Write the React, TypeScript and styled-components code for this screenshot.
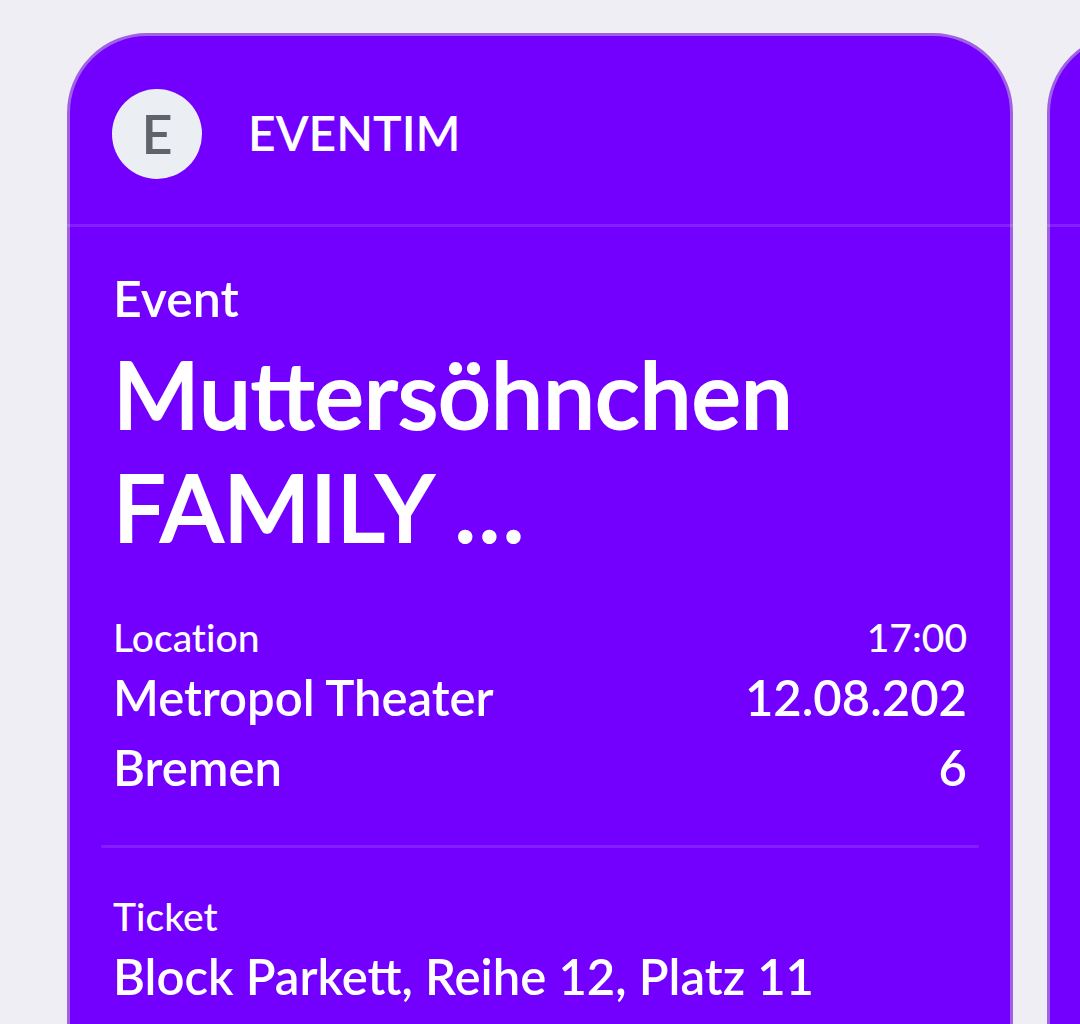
import React from "react";
import styled, { createGlobalStyle } from "styled-components";

const GlobalStyle = createGlobalStyle`
  * { box-sizing: border-box; }
  body {
    margin: 0;
    background: #eeeef4;
    color: #fff;
    font-family: "Google Sans", Lato, "Open Sans", sans-serif;
    font-weight: 600;
  }
  h1, h2, p, dl, dt, dd { margin: 0; font-weight: inherit; }
`;

const Carousel = styled.main`
  display: flex;
  gap: 34px;
  height: 100vh;
  padding: 33px 67px 0;
  overflow: hidden;
`;

const Pass = styled.article`
  flex: 0 0 100%;
  height: max-content;
  min-height: 120vh;
  padding-bottom: 64px;
  border: 3px solid #a061e4;
  border-radius: 80px;
  background: #7300ff;
`;

const Header = styled.header`
  display: flex;
  align-items: center;
  gap: 46px;
  height: 191px;
  margin: 0 -3px;
  padding: 8px 45px 0;
  border-bottom: 3px solid rgba(255, 255, 255, 0.12);
`;

const Avatar = styled.span`
  display: grid;
  place-items: center;
  width: 90px;
  height: 90px;
  border-radius: 50%;
  background: #ebeff3;
  color: #60646a;
  font-size: 54px;
  line-height: 90px;
`;

const Issuer = styled.h2`
  padding-bottom: 2px;
  font-size: 48px;
  line-height: 64px;
`;

const Section = styled.section`
  padding: 38px 43px 0;
`;

const Kicker = styled.p`
  font-size: 50px;
  line-height: 66px;
`;

const Title = styled.h1`
  padding: 6px 0 50px;
  font-size: 93px;
  line-height: 113px;
  && { font-weight: 500; }
  -webkit-text-stroke: 2px #fff;
  stroke-linejoin: round;
`;

const Details = styled.dl<{ $split?: boolean }>`
  display: grid;
  grid-template-columns: ${(p) => (p.$split ? "minmax(0, 1fr) 224px" : "minmax(0, 1fr)")};
  gap: 96px;
  padding: 0 43px;
`;

const Field = styled.div<{ $end?: boolean }>`
  text-align: ${(p) => (p.$end ? "right" : "left")};
`;

const Label = styled.dt`
  font-size: 39px;
  line-height: 49px;
  font-variant-ligatures: none;
  && { font-weight: 500; }
`;

const Value = styled.dd`
  font-size: 49px;
  line-height: 70px;
  overflow-wrap: anywhere;
`;

const Divider = styled.hr`
  height: 3px;
  margin: 43px 31px 44px;
  border: 0;
  border-radius: 2px;
  background: #841eff;
`;

export default function App() {
  return (
    <>
      <GlobalStyle />
      <Carousel>
        <Pass>
          <Header>
            <Avatar>E</Avatar>
            <Issuer>EVENTIM</Issuer>
          </Header>
          <Section>
            <Kicker>Event</Kicker>
            <Title>Muttersöhnchen FAMILY …</Title>
          </Section>
          <Details $split>
            <Field>
              <Label>Location</Label>
              <Value>Metropol Theater Bremen</Value>
            </Field>
            <Field $end>
              <Label>17:00</Label>
              <Value>12.08.2026</Value>
            </Field>
          </Details>
          <Divider />
          <Details>
            <Field>
              <Label>Ticket</Label>
              <Value>Block Parkett, Reihe 12, Platz 11</Value>
            </Field>
          </Details>
        </Pass>
        <Pass aria-hidden="true">
          <Header />
        </Pass>
      </Carousel>
    </>
  );
}
